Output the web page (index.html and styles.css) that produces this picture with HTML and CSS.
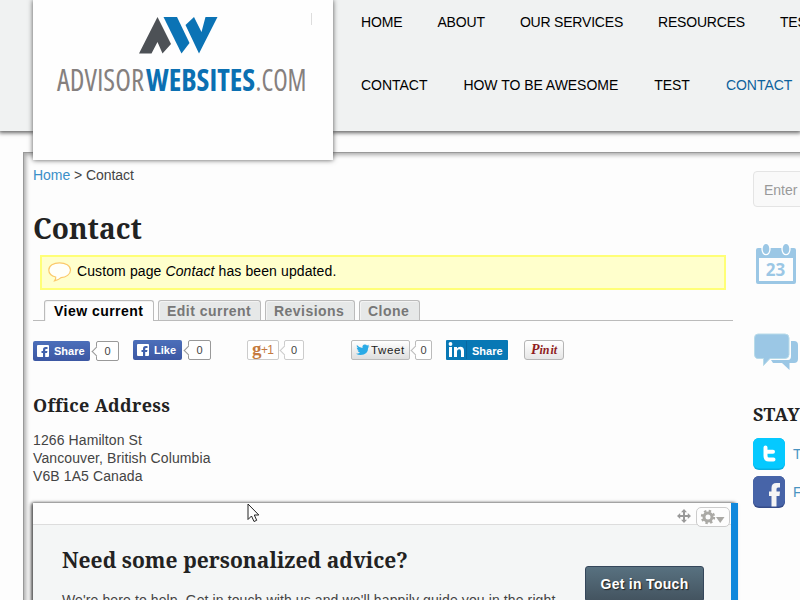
FILE: index.html
```html
<!DOCTYPE html>
<html lang="en">
<head>
<meta charset="utf-8">
<title>Contact</title>
<link rel="stylesheet" href="styles.css">
</head>
<body>
<header class="header">
  <a class="logo">
    <svg width="300" height="160" viewBox="0 0 300 160">
      <path fill="#4d5156" d="M106 53.500L124.500 17L138 44L129.500 53.500L124.500 42L118.500 53.500Z"/>
      <path fill="#0b73b5" d="M130.500 17H144L156.500 43L148.500 53.500Z"/>
      <path fill="#0b73b5" d="M152.500 25L161 17L168.500 32L172.500 17H184.500L166 53.500Z"/>
      <path stroke="#ddd" d="M278.500 13V25"/>
      <g class="logo-text">
        <text x="24" y="91" textLength="87" lengthAdjust="spacingAndGlyphs" fill="#85807e">ADVISOR</text>
        <text x="113" y="91" textLength="109" lengthAdjust="spacingAndGlyphs" fill="#0b70b2" class="logo-bold">WEBSITES</text>
        <text x="222.500" y="91" textLength="51" lengthAdjust="spacingAndGlyphs" fill="#85807e">.COM</text>
      </g>
    </svg>
  </a>
  <nav class="nav">
    <div class="nav-row top"><a>HOME</a><a>ABOUT</a><a class="tight">OUR SERVICES</a><a class="tight">RESOURCES</a><a>TEST</a></div>
    <div class="nav-row"><a>CONTACT</a><a>HOW TO BE AWESOME</a><a>TEST</a><a class="active">CONTACT</a></div>
  </nav>
</header>
<div class="page">
  <main class="main">
    <div class="crumbs"><a>Home</a> &gt; Contact</div>
    <h1>Contact</h1>
    <div class="message">
      <svg width="24" height="20" viewBox="0 0 24 20"><path d="M11.500 .8C17.500 .8 22.500 3.700 22.500 8S18 15.500 13 15.600C11 17.500 9 18.500 6.500 18.800C7.500 17.500 8 16.300 7.700 15C3.500 14 .8 11.500 .8 8C.8 3.700 5.500 .8 11.500 .8Z" fill="#fffffa" stroke="#fbc96b" stroke-width="1.200"/></svg>
      <span>Custom page <em>Contact</em> has been updated.</span>
    </div>
    <div class="tabs"><a class="tab current">View current</a><a class="tab edit">Edit current</a><a class="tab revisions">Revisions</a><a class="tab clone">Clone</a></div>
    <div class="social">
      <span class="btn fb share"><svg width="12" height="12"><rect width="12" height="12" rx="1" fill="#fff"/><path d="M6 12V8H4.500V6H6V4.500Q6 2 8.500 2H10.500V4H9Q8.200 4 8.200 5V6H10.500L10 8H8.200V12" fill="#4060ac"/></svg>Share</span><span class="count share-count">0</span>
      <span class="btn fb like"><svg width="12" height="12"><rect width="12" height="12" rx="1" fill="#fff"/><path d="M6 12V8H4.500V6H6V4.500Q6 2 8.500 2H10.500V4H9Q8.200 4 8.200 5V6H10.500L10 8H8.200V12" fill="#4060ac"/></svg>Like</span><span class="count like-count">0</span>
      <span class="btn gplus"><b>g</b><span>+1</span></span><span class="count pale gplus-count">0</span>
      <span class="btn tweet"><svg width="14" height="12" viewBox="0 0 14 12"><path d="M.8 1Q3.500 4 6.500 4Q6 1 8.800 .6Q10.200 .5 11 1.500L13 .8L12 2.400L13.500 2.300L12.200 3.800Q12 11 4.500 11Q2 11 0 9.700Q2.500 9.700 4 8.500Q2 8.200 1.500 6.500H2.800Q.7 5.500 .7 3.700L2 4.100Q.2 2.700 .8 1Z" fill="#2aaae6"/></svg>Tweet</span><span class="count grey tweet-count">0</span>
      <span class="btn linkedin"><svg width="21" height="20" viewBox="0 0 21 20"><path d="M3 7H6V17H3ZM8 7H11V8.500Q12 6.800 14.300 6.800Q18 6.800 18 11V17H15V11.500Q15 9.200 13.300 9.200Q11 9.200 11 11.800V17H8Z" fill="#fff"/><circle cx="4.500" cy="4" r="1.900" fill="#fff"/><path d="M20.500 1V19" stroke="#0967a0"/></svg><span>Share</span></span>
      <span class="btn pin"><i class="big">P</i><i>in</i><i class="it">it</i></span>
    </div>
    <h2>Office Address</h2>
    <p class="address">1266 Hamilton St<br>Vancouver, British Columbia<br>V6B 1A5 Canada</p>
    <section class="panel">
      <div class="panel-bar">
        <svg width="14" height="14" viewBox="0 0 14 14"><path d="M7 0L10 3.200H8V6H10.800V4L14 7L10.800 10V8H8V10.800H10L7 14L4 10.800H6V8H3.200V10L0 7L3.200 4V6H6V3.200H4Z" fill="#999"/></svg>
        <span class="gear"><svg width="26" height="16" viewBox="0 0 26 16"><circle cx="8" cy="8" r="4" fill="none" stroke="#aaa9a5" stroke-width="3"/><circle cx="8" cy="8" r="6" fill="none" stroke="#aaa9a5" stroke-width="2.400" stroke-dasharray="2.350 2.362"/><path d="M16 8H24.500L20.200 14Z" fill="#aaa9a5"/></svg></span>
      </div>
      <div class="panel-body">
        <div class="advice"><h3>Need some personalized advice?</h3><p>We're here to help. Get in touch with us and we'll happily guide you in the right</p></div>
        <a class="touch">Get in Touch</a>
      </div>
    </section>
  </main>
  <aside class="side">
    <div class="search">Enter</div>
    <svg class="calendar" width="42" height="42" viewBox="0 0 42 42"><path fill="#9bc7e5" fill-rule="evenodd" d="M3 5H39Q41 5 41 7V39Q41 41 39 41H3Q1 41 1 39V7Q1 5 3 5ZM4 15V38H38V15Z"/><g fill="#9bc7e5" stroke="#fff" stroke-width="1.300"><ellipse cx="11" cy="6" rx="4" ry="5.700"/><ellipse cx="31" cy="6" rx="4" ry="5.700"/></g><text x="20.500" y="33" text-anchor="middle">23</text></svg>
    <svg class="chat" width="46" height="40" viewBox="0 0 46 40"><path fill="#9bc7e5" d="M37 8H40Q44 8 44 12V26Q44 30 40 30H35.500V37L28 30H19L17 27H34Q37 27 37 23Z"/><path fill="#9bc7e5" stroke="#b8dbe9" d="M4 1H31Q35 1 35 5V21.500Q35 25.500 31 25.500H16L9.500 32.500V25.500H4Q.5 25.500 .5 21V5Q.5 1 4 1Z"/></svg>
    <h4>STAY</h4>
    <div class="follow"><svg width="32" height="32"><rect width="32" height="32" rx="6" fill="#0aaee0"/><rect width="32" height="30.500" rx="6" fill="#05c9ff"/><path d="M12.500 9.500V18Q12.500 21.500 16 21.500H20.500M12.500 13.800H20" fill="none" stroke="#fff" stroke-width="4" stroke-linecap="round"/></svg><a>Twitter</a></div>
    <div class="follow"><svg width="32" height="32"><rect width="32" height="32" rx="6" fill="#354b88"/><rect width="32" height="30.500" rx="6" fill="#4764a8"/><path d="M18.500 30.500V20H16V15.500H18.500V12Q18.500 7 23.500 7H27V11.500H25Q23.500 11.500 23.500 13V15.500H27L26.500 20H23.500V30.500Z" fill="#f5f5f5"/></svg><a>Facebook</a></div>
  </aside>
</div>
<svg class="cursor" width="13" height="20" viewBox="0 0 13 20"><path d="M1 1V16.500L4.500 13L7 18.500L9.700 17.300L7.300 12H11.800Z" fill="#fff" stroke="#222"/></svg>
</body>
</html>
```
FILE: styles.css
```css
* { box-sizing: border-box; }
html { overflow: hidden; }
body {
  margin: 0; width: 800px; height: 600px; overflow: hidden; position: relative;
  background: #fdfdfd; color: #444;
  font: 14px/18px "Liberation Sans", Arial, sans-serif;
}
svg { display: block; flex: none; }
h1, h2, h3, h4 { margin: 0; color: #222; font-family: "Droid Serif", "Noto Serif", "DejaVu Serif Condensed", serif; font-weight: bold; white-space: nowrap; }
.header { height: 131px; background: #f0f2f2; box-shadow: 0 1px 4px 1px #666; position: relative; padding-left: 361px; }
.logo { position: absolute; left: 33px; top: 0; width: 300px; height: 160px; background: #fefefe; box-shadow: 0 0 5px #555; z-index: 2; }
.logo-text { font: 30px "Open Sans", sans-serif; font-weight: 400; font-stretch: 75%; }
.logo-bold { font-weight: 700; }
.nav { padding-top: 13px; display: grid; gap: 45px; overflow: hidden; }
.nav-row { display: flex; gap: 36px; white-space: nowrap; color: #000; letter-spacing: -.03px; }
.top { gap: 35px; letter-spacing: -.15px; }
.tight { letter-spacing: -.2px; }
.active { color: #0d629c; }
.page { margin: 21px 0 0 23px; width: 777px; height: 460px; padding: 13px 0 0 9px; display: flex; gap: 20px; border: solid #999; border-width: 1px 0 0 1px; box-shadow: inset 4px 4px 4px -2px #aaa; overflow: hidden; }
.main { width: 700px; flex: none; }
.crumbs a { color: #3a8fc8; }
.crumbs { letter-spacing: -.06px; }
h1 { margin-top: 26px; font-size: 28px; line-height: 36px; }
.message { margin: 9px 7px 0; height: 35px; border: 2px solid #ff7; background: #ffc; color: #000; display: flex; padding: 5px 6px 0; gap: 5px; line-height: 18px; letter-spacing: .11px; }
.tabs { margin-top: 10px; height: 21px; border-bottom: 1px solid #bbb; padding-left: 11px; display: flex; gap: 4px; }
.tab { height: 20px; border: 1px solid #bbb; border-bottom: 0; border-radius: 3px 3px 0 0; background: #e6e8e8; color: #777; font-weight: bold; letter-spacing: .47px; padding-left: 8px; line-height: 20px; box-shadow: inset 1px 1px 0 #f3f3f3; white-space: nowrap; }
.current { height: 21px; width: 110px; background: #fdfdfd; color: #000; padding-left: 9px; }
.edit { width: 103px; }
.revisions { width: 90px; }
.clone { width: 61px; }
.social { display: flex; margin-top: 19px; height: 21px; }
.btn { height: 20px; display: flex; align-items: center; border-radius: 2px; font-size: 11px; flex: none; white-space: nowrap; }
.fb { background: linear-gradient(#4c6fba, #3c57a3); color: #fff; font-weight: bold; padding-left: 4px; gap: 5px; }
.share { width: 57px; margin-top: 1px; }
.like { width: 49px; margin-left: 14px; }
.count { position: relative; height: 20px; border: 1px solid #999; border-radius: 2px; background: #fff; font-size: 11px; line-height: 19px; text-align: center; flex: none; }
.count::before { content: ""; position: absolute; left: -4px; top: 6px; width: 6px; height: 6px; background: #fff; border: solid #999; border-width: 0 0 1px 1px; transform: rotate(45deg); }
.share-count { width: 23px; margin: 1px 0 0 6px; }
.like-count { width: 23px; margin-left: 6px; }
.gplus { width: 32px; margin-left: 36px; border: 1px solid #ccc; color: #c57a40; padding-left: 4px; font-size: 12px; letter-spacing: -.6px; background: #fff; }
.gplus b { font: bold 19px/14px "Liberation Serif", serif; margin-top: -3px; }
.gplus-count { width: 20px; margin-left: 5px; }
.pale, .pale::before { border-color: #ccc; }
.grey, .grey::before { border-color: #bbb; }
.tweet { width: 59px; margin-left: 47px; border: 1px solid #bbb; background: linear-gradient(#fff, #dedede); padding-left: 4px; gap: 1px; color: #222; font-size: 11.5px; letter-spacing: .6px; }
.tweet-count { width: 17px; margin-left: 5px; }
.linkedin { width: 62px; margin-left: 14px; background: #0878b5; color: #fff; font-weight: bold; gap: 5px; padding-top: 1px; border-radius: 1px; }
.linkedin svg { margin-top: -1px; }
.pin { width: 40px; margin-left: 16px; border: 1px solid #b5b5b5; border-radius: 3px; background: linear-gradient(#fff, #e6e6e6); color: #8f1c20; font: italic bold 12px "Liberation Serif", serif; justify-content: center; }
.big { font-size: 14px; }
.it { margin-left: 1px; }
h2 { margin-top: 32px; font-size: 18px; line-height: 24px; letter-spacing: .28px; }
.address { margin: 14px 0 18px; letter-spacing: .1px; }
.panel { width: 705px; border-right: 7px solid #1088dc; background: #f4f6f6; box-shadow: -2px 0 4px -1px #555, -2px -1px 3px -1px #555; height: 110px; }
.panel-bar { height: 22px; background: #fdfdfd; border-bottom: 1px solid #ddd; display: flex; justify-content: flex-end; gap: 5px; padding: 6px 1px 0 0; }
.gear { width: 34px; height: 20px; margin-top: -2px; border: 1px solid #ccc; border-radius: 5px; background: #fdfdfd; padding: 1px 0 0 3px; }
.panel-body { display: flex; padding: 20px 27px 0 29px; }
.advice { width: 523px; flex: none; }
.advice h3 { font-size: 21px; line-height: 30px; letter-spacing: .03px; }
.advice p { margin: 16px 0 0; white-space: nowrap; letter-spacing: .11px; }
.touch { margin-top: 21px; width: 119px; height: 36px; background: linear-gradient(#587180, #43535f); border: 1px solid #34465a; border-radius: 3px; color: #fff; font-weight: bold; text-align: center; line-height: 34px; text-shadow: 1px 1px 1px #222; letter-spacing: .3px; flex: none; }
.side { width: 230px; flex: none; padding-top: 5px; }
.search { height: 36px; border: 1px solid #e4e4e4; border-radius: 4px; background: #f9f9f9; color: #999; padding-left: 10px; line-height: 36px; }
.calendar { margin: 36px 0 0 2px; font: bold 17px "Open Sans", sans-serif; fill: #9bc7e5; }
.chat { margin: 48px 0 0 1px; }
h4 { margin: 29px 0 12px; font-size: 18px; line-height: 24px; letter-spacing: .4px; }
.follow { display: flex; align-items: center; gap: 8px; margin-bottom: 6px; color: #4994c2; }
.cursor { position: absolute; left: 247px; top: 503px; z-index: 3; }
```
